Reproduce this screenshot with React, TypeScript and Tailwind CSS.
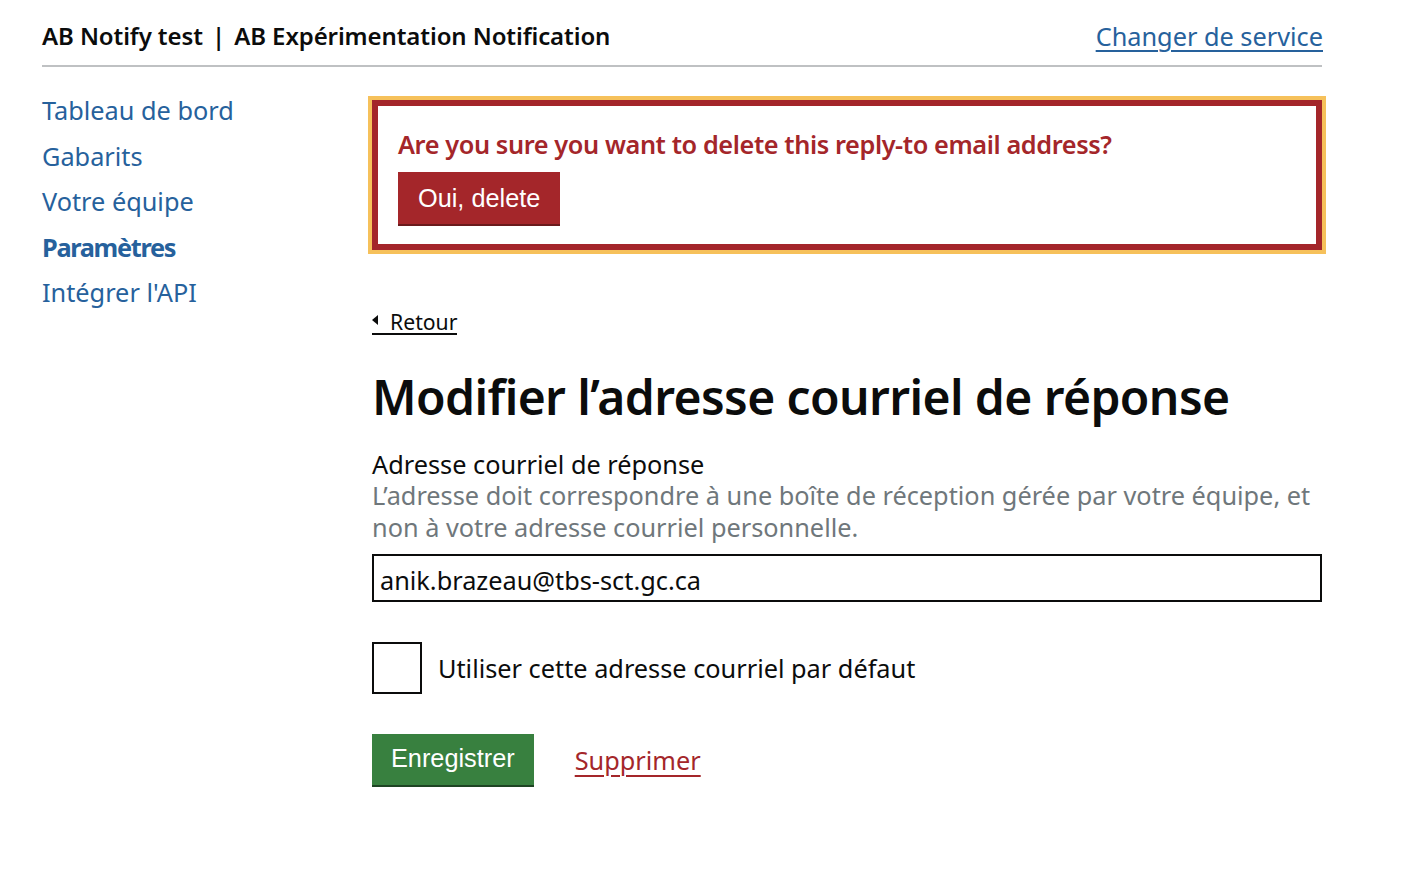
import { useState } from 'react';

const navItems = [
  { label: 'Tableau de bord', active: false },
  { label: 'Gabarits', active: false },
  { label: 'Votre équipe', active: false },
  { label: 'Paramètres', active: true },
  { label: "Intégrer l'API", active: false },
];

export default function App() {
  const [email, setEmail] = useState('anik.brazeau@tbs-sct.gc.ca');
  const [isDefault, setIsDefault] = useState(false);

  return (
    <div className="min-h-screen bg-white text-[#0b0c0c] font-['Noto_Sans',sans-serif]">
      <div className="w-[1280px] ml-[42px]">
        {/* en-tête du service */}
        <header className="flex items-end justify-between h-[67px] pb-[14px] border-b-2 border-[#bfc1c3]">
          <div className="text-[24px] font-semibold tracking-[-0.1px] leading-[30px]">
            AB Notify test <span className="mx-[3px]">|</span> AB Expérimentation Notification
          </div>
          <a href="#" className="text-[25.3px] leading-[30px] text-[#26619c] underline underline-offset-[4px] decoration-[2px] -mr-[1px]">
            Changer de service
          </a>
        </header>

        <div className="flex pt-[26px]">
          <nav className="w-[330px] shrink-0">
            <ul className="flex flex-col">
              {navItems.map((item) => (
                <li key={item.label} className="h-[45.5px] leading-[34px]">
                  <a
                    href="#"
                    className={`text-[25.3px] text-[#26619c] ${item.active ? 'font-bold tracking-[-1.3px]' : ''}`}
                  >
                    {item.label}
                  </a>
                </li>
              ))}
            </ul>
          </nav>

          <main className="flex-1 mt-[3px]">
            {/* bannière de confirmation */}
            <div className="-ml-[4px] w-[958px] border-[4px] border-[#f6c15b]">
              <div className="border-[6px] border-[#a4262a] px-[20px] pt-[20px] pb-[20px]">
                <p className="text-[25.3px] font-semibold text-[#a4262a] tracking-[-0.4px] leading-[36px]">
                  Are you sure you want to delete this reply-to email address?
                </p>
                <button className="mt-[10px] h-[52px] px-[20px] pt-[2px] bg-[#a4262a] text-white text-[25.3px] font-['Liberation_Sans',Arial,sans-serif] shadow-[0_2px_0_#6a1a1c]">
                  Oui, delete
                </button>
              </div>
            </div>

            <div className="mt-[53px]">
              <a href="#" className="inline-flex items-center text-[21.2px] leading-[23px] border-b-2 border-[#0b0c0c]">
                <span className="w-0 h-0 border-y-[5px] border-y-transparent border-r-[6px] border-r-[#0b0c0c] mr-[12px] -mt-[2px]" />
                Retour
              </a>
            </div>

            <h1 className="mt-[34px] text-[48px] font-semibold tracking-[-0.6px] leading-[56px]">
              Modifier l’adresse courriel de réponse
            </h1>

            <form className="mt-[24px] w-[950px]">
              <label htmlFor="email" className="block text-[25.3px] leading-[30px]">
                Adresse courriel de réponse
              </label>
              <p className="text-[25.3px] leading-[32px] text-[#6f777b]">
                L’adresse doit correspondre à une boîte de réception gérée par votre équipe, et non à votre adresse courriel personnelle.
              </p>
              <input
                id="email"
                type="text"
                value={email}
                onChange={(e) => setEmail(e.target.value)}
                className="mt-[11px] w-full h-[48px] border-2 border-[#0b0c0c] px-[6px] pt-[4px] text-[25.3px] outline-none"
              />

              <label className="mt-[40px] flex items-center gap-[16px] cursor-pointer">
                <input
                  type="checkbox"
                  checked={isDefault}
                  onChange={(e) => setIsDefault(e.target.checked)}
                  className="appearance-none w-[50px] h-[52px] border-2 border-[#0b0c0c] bg-white"
                />
                <span className="text-[25.3px] pt-[2px]">Utiliser cette adresse courriel par défaut</span>
              </label>

              <div className="mt-[40px] flex items-center gap-[41px]">
                <button
                  type="button"
                  className="h-[51px] px-[19px] bg-[#38803f] text-white text-[25.3px] font-['Liberation_Sans',Arial,sans-serif] shadow-[0_2px_0_#1e4423]"
                >
                  Enregistrer
                </button>
                <a href="#" className="text-[25.3px] pt-[4px] text-[#a4262a] underline underline-offset-[5px] decoration-[2px]">
                  Supprimer
                </a>
              </div>
            </form>
          </main>
        </div>
      </div>
    </div>
  );
}
